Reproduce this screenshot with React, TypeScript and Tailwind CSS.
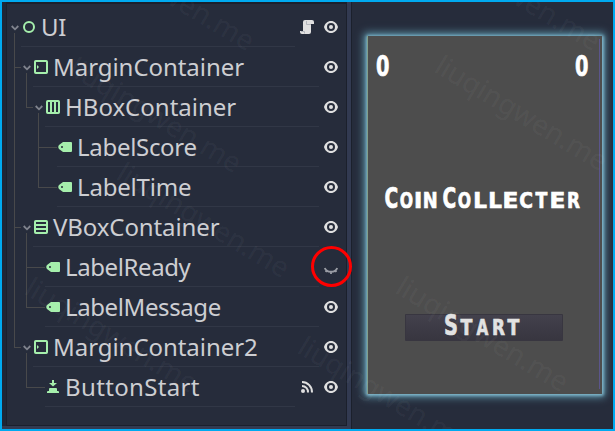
import React from "react";

type Kind = "control" | "margin" | "hbox" | "vbox" | "label" | "button";
type Node = { name: string; level: number; kind: Kind; tracking: string; leaf?: boolean; extra?: "script" | "signal"; hidden?: boolean };

const NODES: Node[] = [
  { name: "UI", level: 0, kind: "control", tracking: "tracking-[-0.3px]", extra: "script" },
  { name: "MarginContainer", level: 1, kind: "margin", tracking: "tracking-[-0.05px]" },
  { name: "HBoxContainer", level: 2, kind: "hbox", tracking: "tracking-normal" },
  { name: "LabelScore", level: 3, kind: "label", tracking: "tracking-[-0.3px]", leaf: true },
  { name: "LabelTime", level: 3, kind: "label", tracking: "tracking-[-0.2px]", leaf: true },
  { name: "VBoxContainer", level: 1, kind: "vbox", tracking: "tracking-[-0.1px]" },
  { name: "LabelReady", level: 2, kind: "label", tracking: "tracking-[-0.4px]", leaf: true, hidden: true },
  { name: "LabelMessage", level: 2, kind: "label", tracking: "tracking-[-0.4px]", leaf: true },
  { name: "MarginContainer2", level: 1, kind: "margin", tracking: "tracking-[-0.05px]" },
  { name: "ButtonStart", level: 2, kind: "button", tracking: "tracking-[0.350px]", leaf: true, extra: "signal" },
];

function NodeIcon({ kind }: { kind: Kind }) {
  return (
    <svg width="14" height="14" viewBox="0 0 14 14" className="block shrink-0" fill="none" stroke="#a5efac" strokeWidth="2">
      {kind === "control" && <circle cx="7" cy="7" r="5" />}
      {(kind === "margin" || kind === "hbox" || kind === "vbox") && <rect x="1" y="1" width="12" height="12" rx="0.8" />}
      {kind === "margin" && <path d="M3 5v4l2-2z" fill="#a5efac" stroke="none" />}
      {kind === "hbox" && <path d="M5 1v12M9 1v12" />}
      {kind === "vbox" && <path d="M1 5h12M1 9h12" />}
      {kind === "label" && (
        <path
          fill="#a5efac"
          stroke="none"
          fillRule="evenodd"
          d="M5 2h8q1 0 1 1v8q0 1-1 1H5L1 9Q-.5 7 1 5zM4 6a1 1 0 1 0 0 2a1 1 0 1 0 0-2z"
        />
      )}
      {kind === "button" && (
        <path fill="#a5efac" stroke="none" d="M6 0h2v3h3L7 6.5L3 3h3zM4 8h6q1 0 1 1v2h1q1 0 1 1v1H1v-1q0-1 1-1h1V9q0-1 1-1z" />
      )}
    </svg>
  );
}

function Eye({ hidden }: { hidden?: boolean }) {
  return hidden ? (
    <svg width="14" height="14" viewBox="0 0 14 14" className="mt-px block" fill="none" stroke="#9a9da5" strokeWidth="2">
      <path d="M.8 7C2.500 12 11.500 12 13.200 7M3 9l-1.300 2M7 10v3M11 9l1.300 2" strokeWidth="1.800" />
    </svg>
  ) : (
    <svg width="14" height="14" viewBox="0 0 14 14" className="block">
      <path
        fill="#e0e0e0"
        fillRule="evenodd"
        d="M7 1C3.500 1 1 3.500 0 7C1 10.500 3.500 13 7 13S13 10.500 14 7C13 3.500 10.500 1 7 1zM7 3a4 4 0 1 1 0 8a4 4 0 1 1 0-8z"
      />
      <circle cx="7" cy="7" r="2" fill="#e0e0e0" />
    </svg>
  );
}

function Extra({ type }: { type: "script" | "signal" }) {
  return type === "script" ? (
    <svg width="14" height="14" viewBox="0 0 14 14" className="block">
      <path fill="#e0e0e0" d="M5 0h7q2 0 2 2v2h-3v8q0 2-2 2H2q-2 0-2-2v-1h3V2q0-2 2-2z" />
      <path fill="none" stroke="#b4b7bd" d="M6.500 1v3.500h4.500M1 11.500h3.500v2" />
    </svg>
  ) : (
    <svg width="14" height="14" viewBox="0 0 14 14" className="block" fill="none" stroke="#e0e0e0" strokeWidth="2">
      <circle cx="3" cy="11" r="2" fill="#e0e0e0" stroke="none" />
      <path d="M2 2a10 10 0 0 1 10 10.500M2 6a6 6 0 0 1 6 6.500" />
    </svg>
  );
}

const INDENT = ["pl-[4px]", "pl-[16px]", "pl-[28px]", "pl-[40px]"];

function Row({ node }: { node: Node }) {
  return (
    <div className={`flex h-10 ${INDENT[node.level]}`}>
      <div className="flex w-[10px] shrink-0 items-center">
        {!node.leaf && (
          <svg width="8" height="6" viewBox="0 0 8 6" className="mt-px block shrink-0" fill="none" stroke="#80848e" strokeWidth="1.800">
            <path d="M.7 1L4 4.300L7.300 1" />
          </svg>
        )}
      </div>
      <div className="flex min-w-0 flex-1 items-center border-b border-[#313746] pl-px">
        <NodeIcon kind={node.kind} />
        <span className={`ml-[5px] whitespace-nowrap text-[24px] leading-[38px] text-[#cdced2] ${node.tracking}`}>{node.name}</span>
      </div>
      {node.extra && (
        <div className="ml-[5px] flex w-[19px] items-center">
          <Extra type={node.extra} />
        </div>
      )}
      <div className="ml-[5px] flex w-[22px] items-center">
        <Eye hidden={node.hidden} />
      </div>
    </div>
  );
}

// Ink width of each bold capital, in em, used to fit it to an even cell.
const INK: Record<string, number> = { C: 0.62, O: 0.74, I: 0.19, N: 0.65, L: 0.54, E: 0.5, T: 0.67, R: 0.69, S: 0.6, A: 0.76, "0": 0.6 };

function Arcade({ text, className = "" }: { text: string; className?: string }) {
  return (
    <span
      className={`flex items-baseline font-['DejaVu_Sans','Liberation_Sans',sans-serif] font-bold leading-none [-webkit-text-stroke:0.700px_currentColor] ${className}`}
    >
      {text.split("").map((ch, i) => {
        const big = i === 0;
        const key = ch.toUpperCase();
        const size = big ? 28 : 22;
        const ink = key === "I" ? 4.2 : 11.6;
        return (
          <span key={i} className={`flex justify-center uppercase ${key === "I" ? "w-[8px]" : "w-[15.500px]"} ${big ? "text-[28px]" : "text-[22px]"}`}>
            <span className="block" style={{ transform: `scaleX(${ink / (size * INK[key])})` }}>{ch}</span>
          </span>
        );
      })}
    </span>
  );
}

const MARKS = [
  [169, -8], [156, 114], [204, 219], [112, 334], [385, 393], [515, -8], [522, 112], [483, 333],
];

export default function App() {
  return (
    <div className="relative flex h-[431px] w-[615px] overflow-hidden border-2 border-[#00aaf0] bg-[#262c3b] font-['Noto_Sans','Open_Sans',sans-serif]">
      <div className="w-[350px] shrink-0 border-r border-[#1b202c] bg-[#323a51] pb-[3px] pr-[4px]">
        <div className="relative h-full border-l-4 border-[#202635] bg-[#262c3b]">
          <div className="h-full border border-t-2 border-[#1b202c] pt-[3px]">
            <svg className="absolute left-0 top-0" width="60" height="420" viewBox="6 2 60 420" fill="none" stroke="#48494b" shapeRendering="crispEdges">
              <path d="M14.500 33v314.500H21M14.500 67.500H21M14.500 227.500H21M26.500 73v34.500H33M38.500 113v74.500H57M38.500 147.500H57M26.500 233v74.500H45M26.500 267.500H45M26.500 353v34.500H45" />
            </svg>
            <div className="relative">
              {NODES.map((n) => <Row key={n.name} node={n} />)}
            </div>
          </div>
        </div>
      </div>
      <div className="flex-1 pl-[15px] pr-[11px] pt-[34px]">
        <div className="flex h-[358px] flex-col border-x border-l-[#82a08c] border-r-[#4d4d4d] bg-[#4d4d4d] text-white shadow-[0_0_3px_1.500px_#85bed2,0_0_8px_3px_#5f96ab]">
          <div className="flex justify-between pl-[7px] pr-[12px] pt-[17px]">
            <Arcade text="0" />
            <Arcade text="0" />
          </div>
          <div className="mt-[104px] flex justify-center gap-[3.500px] pr-[5px]">
            <Arcade text="Coin" />
            <Arcade text="Collecter" />
          </div>
          <div className="ml-[37px] mt-[101px] flex h-[27px] w-[158px] justify-center rounded-[1px] border border-b-2 border-[#383640] bg-linear-to-b from-[#43414c] to-[#383640] pr-[3px] text-[#e2e2e2]">
            <Arcade text="Start" className="-mt-[3px]" />
          </div>
        </div>
      </div>
      <div className="absolute left-[597px] top-[37px] h-[350px] w-px bg-[#5b558b]" />
      <div className="absolute left-[309px] top-[244px] h-[41px] w-[41px] rounded-full border-[3px] border-[#ff0000]" />
      {MARKS.map(([x, y], i) => (
        <span
          key={i}
          className="pointer-events-none absolute -translate-x-1/2 -translate-y-1/2 rotate-[31deg] whitespace-nowrap text-[28px] leading-none text-white/[0.055]"
          style={{ left: x - 2, top: y - 2 }}
        >
          liuqingwen.me
        </span>
      ))}
    </div>
  );
}
